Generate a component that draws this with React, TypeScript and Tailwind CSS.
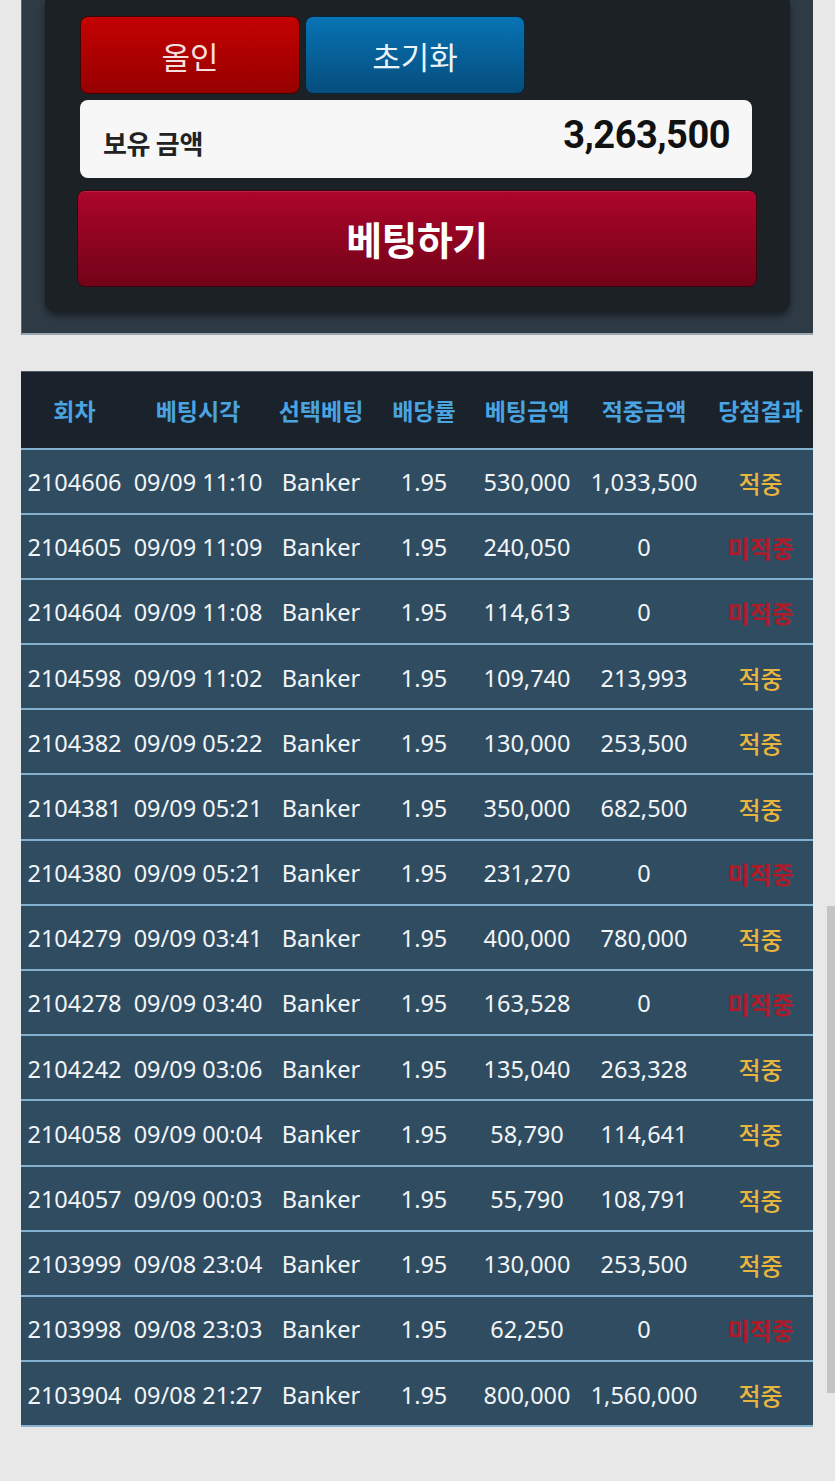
import React from 'react';

type Bet = {
  round: string;
  time: string;
  pick: string;
  odds: string;
  amount: string;
  payout: string;
  win: boolean;
};

const bets: Bet[] = [
  { round: '2104606', time: '09/09 11:10', pick: 'Banker', odds: '1.95', amount: '530,000', payout: '1,033,500', win: true },
  { round: '2104605', time: '09/09 11:09', pick: 'Banker', odds: '1.95', amount: '240,050', payout: '0', win: false },
  { round: '2104604', time: '09/09 11:08', pick: 'Banker', odds: '1.95', amount: '114,613', payout: '0', win: false },
  { round: '2104598', time: '09/09 11:02', pick: 'Banker', odds: '1.95', amount: '109,740', payout: '213,993', win: true },
  { round: '2104382', time: '09/09 05:22', pick: 'Banker', odds: '1.95', amount: '130,000', payout: '253,500', win: true },
  { round: '2104381', time: '09/09 05:21', pick: 'Banker', odds: '1.95', amount: '350,000', payout: '682,500', win: true },
  { round: '2104380', time: '09/09 05:21', pick: 'Banker', odds: '1.95', amount: '231,270', payout: '0', win: false },
  { round: '2104279', time: '09/09 03:41', pick: 'Banker', odds: '1.95', amount: '400,000', payout: '780,000', win: true },
  { round: '2104278', time: '09/09 03:40', pick: 'Banker', odds: '1.95', amount: '163,528', payout: '0', win: false },
  { round: '2104242', time: '09/09 03:06', pick: 'Banker', odds: '1.95', amount: '135,040', payout: '263,328', win: true },
  { round: '2104058', time: '09/09 00:04', pick: 'Banker', odds: '1.95', amount: '58,790', payout: '114,641', win: true },
  { round: '2104057', time: '09/09 00:03', pick: 'Banker', odds: '1.95', amount: '55,790', payout: '108,791', win: true },
  { round: '2103999', time: '09/08 23:04', pick: 'Banker', odds: '1.95', amount: '130,000', payout: '253,500', win: true },
  { round: '2103998', time: '09/08 23:03', pick: 'Banker', odds: '1.95', amount: '62,250', payout: '0', win: false },
  { round: '2103904', time: '09/08 21:27', pick: 'Banker', odds: '1.95', amount: '800,000', payout: '1,560,000', win: true },
];

const headers = ['회차', '베팅시각', '선택베팅', '배당률', '베팅금액', '적중금액', '당첨결과'];
const colWidths = ['w-[107px]', 'w-[140px]', 'w-[106px]', 'w-[100px]', 'w-[106px]', 'w-[128px]', 'w-[105px]'];

const kr = '"Noto Sans CJK KR", "Noto Sans", sans-serif';

export default function App() {
  return (
    <div
      className="relative min-h-[1481px] bg-[#e8e8e8] overflow-hidden"
      style={{ fontFamily: '"Noto Sans", "Noto Sans CJK KR", sans-serif' }}
    >
      {/* Betting panel */}
      <div className="mx-[21px] w-[792px] bg-[#2e3a44] border-l border-[#5d6b77] border-b-2 border-b-[#9aa7b2] pb-[21px]">
        <div className="mx-[23px] bg-[#1b2125] rounded-b-[12px] shadow-[0_4px_6px_rgba(0,0,0,0.45)] pl-[35px] pr-[38px] pt-[16px] pb-[25px]" style={{ fontFamily: kr }}>
          <div className="flex gap-[5px]">
            <button className="w-[220px] h-[78px] rounded-[8px] border border-[#3a0606] bg-gradient-to-b from-[#c30202] to-[#970000] text-[#f6dede] text-[31px] leading-none">
              올인
            </button>
            <button className="w-[220px] h-[78px] rounded-[8px] border border-[#06243a] bg-gradient-to-b from-[#0874b5] to-[#054d7d] text-[#eaf3fa] text-[31px] leading-none">
              초기화
            </button>
          </div>
          <div className="mt-[6px] h-[78px] rounded-[8px] bg-[#f7f7f7] flex items-center justify-between pl-[23px] pr-[22px]">
            <span className="text-[26px] font-bold text-[#222] tracking-[-0.3px] mt-[6px]">보유 금액</span>
            <span
              className="text-[38px] font-bold text-[#111] tracking-[-0.5px] -mt-[8px]"
              style={{ fontFamily: 'Roboto, "Noto Sans", sans-serif' }}
            >
              3,263,500
            </span>
          </div>
          <button className="mt-[12px] -ml-[3px] w-[680px] h-[97px] rounded-[8px] border border-[#3d0410] bg-gradient-to-b from-[#ad052b] to-[#720318] text-white text-[39px] font-bold leading-none tracking-[-0.5px] shadow-[inset_0_1px_0_rgba(255,255,255,0.12)]">
            베팅하기
          </button>
        </div>
      </div>

      {/* History table */}
      <table className="mt-[36px] ml-[21px] w-[792px] table-fixed border-collapse border-b-2 border-b-[#88b3d0]">
        <thead>
          <tr className="h-[77px] bg-[#1a232b] border-t border-[#4b5864]">
            {headers.map((h, i) => (
              <th
                key={h}
                className={`${colWidths[i]} p-0 text-center text-[23px] font-bold text-[#4ba4e2]`}
                style={{ fontFamily: kr }}
              >
                {h}
              </th>
            ))}
          </tr>
        </thead>
        <tbody>
          {bets.map((b) => (
            <tr key={b.round} className="h-[65.2px] bg-[#304c61] border-t-2 border-[#84b0cf] text-[#f2f5f7] text-[23.5px]">
              <td className="p-0 pt-[3px] text-center whitespace-nowrap">{b.round}</td>
              <td className="p-0 pt-[3px] text-center whitespace-nowrap">{b.time}</td>
              <td className="p-0 pt-[3px] text-center">{b.pick}</td>
              <td className="p-0 pt-[3px] text-center">{b.odds}</td>
              <td className="p-0 pt-[3px] text-center">{b.amount}</td>
              <td className="p-0 pt-[3px] text-center whitespace-nowrap">{b.payout}</td>
              <td
                className={`p-0 pt-[3px] text-center text-[24px] ${b.win ? 'font-medium text-[#e8b53e]' : 'font-bold text-[#ae1b29]'}`}
                style={{ fontFamily: kr }}
              >
                {b.win ? '적중' : '미적중'}
              </td>
            </tr>
          ))}
        </tbody>
      </table>

      {/* Scrollbar thumb */}
      <div className="absolute right-0 top-[906px] w-[8px] h-[487px] bg-[#c4c4c4]" />
    </div>
  );
}
